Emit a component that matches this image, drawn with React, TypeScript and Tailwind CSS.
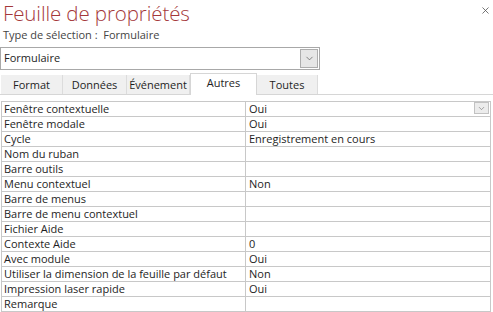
import { X, ChevronDown } from 'lucide-react';

const rows: [string, string][] = [
    ['Fenêtre contextuelle', 'Oui'],
    ['Fenêtre modale', 'Oui'],
    ['Cycle', 'Enregistrement en cours'],
    ['Nom du ruban', ''],
    ['Barre outils', ''],
    ['Menu contextuel', 'Non'],
    ['Barre de menus', ''],
    ['Barre de menu contextuel', ''],
    ['Fichier Aide', ''],
    ['Contexte Aide', '0'],
    ['Avec module', 'Oui'],
    ['Utiliser la dimension de la feuille par défaut', 'Non'],
    ['Impression laser rapide', 'Oui'],
    ['Remarque', ''],
];

const tabs = [
    { label: 'Format', w: 'w-[62px]' },
    { label: 'Données', w: 'w-[64px]' },
    { label: 'Événement', w: 'w-[63px]' },
    { label: 'Autres', w: 'w-[67px]', active: true },
    { label: 'Toutes', w: 'w-[61px]' },
];

export default function App() {
    return (
        <div className="w-[493px] h-[312px] bg-white overflow-hidden text-[11px] text-[#1e1e1e] font-['Open_Sans',sans-serif]">
            {/* Header */}
            <div className="flex items-start justify-between">
                <h1 className="pl-[3px] text-[20.5px] leading-[27px] font-light tracking-[-0.1px] text-[#a4373a]">Feuille de propriétés</h1>
                <X className="w-[11px] h-[11px] mt-[5px] mr-[2px] text-[#555]" strokeWidth={1.75} />
            </div>
            <div className="pl-[3px] leading-[15px] text-[#444]">Type de sélection :&nbsp; Formulaire</div>

            {/* Selection dropdown */}
            <div className="mt-[5px] w-[320px] h-[23px] border border-[#a8a8a8] flex items-center justify-between">
                <span className="pl-[3px]">Formulaire</span>
                <div className="w-[18px] h-[19px] mr-[1px] bg-[#e6e6e6] border border-[#adadad] flex items-center justify-center">
                    <ChevronDown className="w-[11px] h-[11px] text-[#555]" strokeWidth={1.5} />
                </div>
            </div>

            {/* Tabs */}
            <div className="mt-[3px] h-[22px] flex items-end border-b border-[#d6d6d6]">
                {tabs.map((t) =>
                    t.active ? (
                        <div
                            key={t.label}
                            className={`${t.w} h-[22px] -mb-px bg-white border border-b-0 border-[#d6d6d6] flex justify-center pt-[1px] leading-[16px]`}
                        >
                            {t.label}
                        </div>
                    ) : (
                        <div
                            key={t.label}
                            className={`${t.w} h-[19px] bg-[#f0f0f0] border-r border-[#dcdcdc] first:ml-[1px] flex justify-center leading-[19px]`}
                        >
                            {t.label}
                        </div>
                    )
                )}
            </div>

            {/* Property grid */}
            <div className="mt-[6px] ml-[1px] w-[490px] border-t border-l border-[#c8c8c8] grid grid-cols-[244px_245px]">
                {rows.map(([name, value], i) => (
                    <div key={name} className="contents">
                        <div className="h-[15px] border-r border-b border-[#c8c8c8] pl-[2px] leading-[14px] whitespace-nowrap">
                            {name}
                        </div>
                        <div className="h-[15px] border-r border-b border-[#c8c8c8] pl-[3px] leading-[14px] flex items-start justify-between">
                            <span>{value}</span>
                            {i === 0 && (
                                <div className="w-[15px] h-[12px] mr-[1px] bg-[#ececec] border border-[#c2c2c2] flex items-center justify-center">
                                    <ChevronDown className="w-[9px] h-[9px] text-[#666]" strokeWidth={1.5} />
                                </div>
                            )}
                        </div>
                    </div>
                ))}
            </div>
        </div>
    );
}
